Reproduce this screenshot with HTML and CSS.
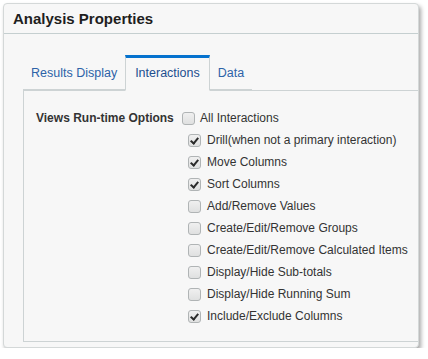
FILE: index.html
```html
<!DOCTYPE html>
<html>
	<head>
		<meta charset="utf-8" />
		<title>Analysis Properties</title>
		<link rel="stylesheet" href="styles.css">
	</head>
	<body>
		<div id="dialog">
			<div class="dialog-title">Analysis Properties</div>
			<div class="tabs">
				<div class="tab">Results Display</div>
				<div class="tab active">Interactions</div>
				<div class="tab">Data</div>
			</div>
			<div class="tab-body">
				<div class="field-label">Views Run-time Options</div>
				<div class="options">
					<div class="opt"><span class="cb"></span>All Interactions</div>
					<div class="sub-options">
						<div class="opt"><span class="cb checked"></span>Drill(when not a primary interaction)</div>
						<div class="opt"><span class="cb checked"></span>Move Columns</div>
						<div class="opt"><span class="cb checked"></span>Sort Columns</div>
						<div class="opt"><span class="cb"></span>Add/Remove Values</div>
						<div class="opt"><span class="cb"></span>Create/Edit/Remove Groups</div>
						<div class="opt"><span class="cb"></span>Create/Edit/Remove Calculated Items</div>
						<div class="opt"><span class="cb"></span>Display/Hide Sub-totals</div>
						<div class="opt"><span class="cb"></span>Display/Hide Running Sum</div>
						<div class="opt"><span class="cb checked"></span>Include/Exclude Columns</div>
					</div>
				</div>
			</div>
		</div>
	</body>
</html>
```

FILE: styles.css
```css
body {
	margin: 0px;
	background-color: white;
	font-family: "Liberation Sans", Arial, sans-serif;
	color: #333333;
}

#dialog {
	margin: 3px 0px 0px 3px;
	width: 414px;
	height: 343px;
	background-color: #f7f7f7;
	border: 1px solid #d4d8d8;
	border-radius: 4px;
	box-shadow: 2px 3px 4px rgba(0, 0, 0, 0.35);
	overflow: hidden;
}

.dialog-title {
	height: 29px;
	line-height: 29px;
	padding-left: 9px;
	font-size: 15px;
	font-weight: bold;
	color: #1e1e1e;
	border-bottom: 1px solid #c5cfd0;
}

.tabs {
	display: flex;
	margin-top: 21px;
	padding-left: 19px;
}

.tab {
	height: 31px;
	line-height: 31px;
	margin-top: 3px;
	padding: 0px 8px;
	font-size: 12.5px;
	color: #2d63a8;
	border-bottom: 1px solid #cdd3d4;
}

.tab.active {
	margin-top: 0px;
	height: 32px;
	padding: 0px 9px;
	color: #1d4f8f;
	border-top: 3px solid #0572ce;
	border-left: 1px solid #cdd3d4;
	border-right: 1px solid #cdd3d4;
	border-bottom: 1px solid #f7f7f7;
}

.tabs::after {
	content: "";
	flex: 1;
	border-bottom: 1px solid #cdd3d4;
}

.tab-body {
	display: flex;
	margin-left: 19px;
	margin-right: -20px;
	margin-top: -1px;
	height: 234px;
	padding: 16px 0px 0px 12px;
	border: 1px solid #cdd3d4;
	font-size: 12px;
}

.field-label {
	width: 146px;
	height: 22px;
	line-height: 22px;
	font-weight: bold;
}

.opt {
	display: flex;
	align-items: center;
	height: 22px;
	white-space: nowrap;
}

.sub-options {
	padding-left: 6px;
}

.cb {
	box-sizing: border-box;
	width: 13px;
	height: 13px;
	margin-right: 5px;
	border: 1px solid #b0b4b5;
	border-radius: 3px;
	background: linear-gradient(#f0f0f0, #dfe0e0);
	position: relative;
}

.sub-options .cb {
	margin-right: 6px;
}

.cb.checked::after {
	content: "";
	position: absolute;
	left: 3px;
	top: 1px;
	width: 3px;
	height: 6px;
	border: solid #2b2b2b;
	border-width: 0px 2px 2px 0px;
	transform: rotate(40deg);
}
```
